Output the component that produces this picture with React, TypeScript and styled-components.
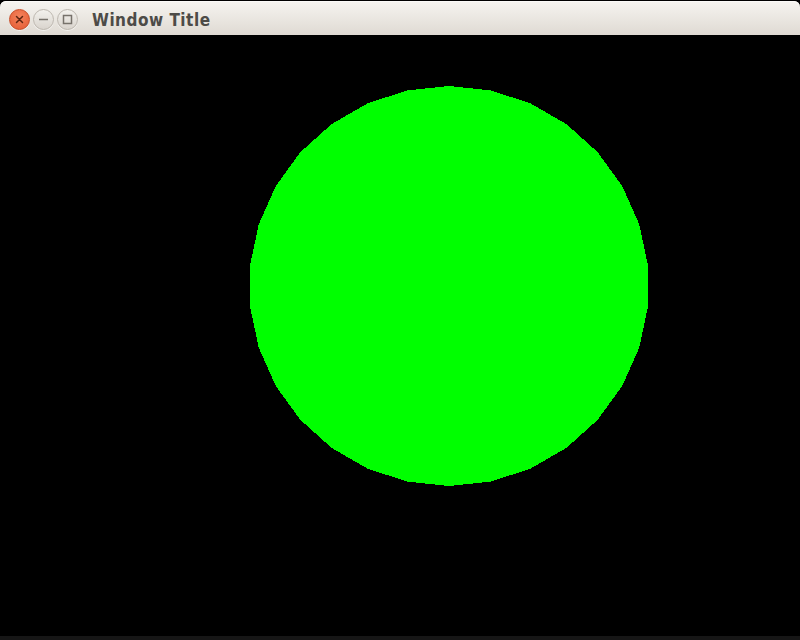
import React from "react";
import styled, { createGlobalStyle } from "styled-components";

const Global = createGlobalStyle`
  html, body { margin: 0; padding: 0; background: #000; }
  body { width: 800px; height: 640px; overflow: hidden; }
`;

const Frame = styled.div`
  width: 800px;
  height: 640px;
  display: flex;
  flex-direction: column;
  background: #000;
  padding-top: 1px;
  box-sizing: border-box;
`;

const TitleBar = styled.div`
  height: 34px;
  flex: none;
  display: flex;
  align-items: center;
  padding-left: 9px;
  padding-top: 3px;
  box-sizing: border-box;
  border-radius: 6px 6px 0 0;
  background: linear-gradient(#f6f4f0, #dfdad3);
  box-shadow: inset 0 1px 0 #fbfaf8;
`;

const Buttons = styled.div`
  display: flex;
  gap: 3px;
  align-items: center;
`;

const WinButton = styled.div<{ $close?: boolean }>`
  width: 21px;
  height: 21px;
  border-radius: 50%;
  box-sizing: border-box;
  display: flex;
  align-items: center;
  justify-content: center;
  background: ${(p) =>
    p.$close
      ? "radial-gradient(circle at 50% 35%, #f4835c, #e45a32)"
      : "linear-gradient(#f3f1ed, #d9d4cd)"};
  border: 1px solid ${(p) => (p.$close ? "#c84a24" : "#bdb7af")};
  box-shadow: 0 1px 0 rgba(255,255,255,0.6);
`;

const Title = styled.div`
  margin-left: 14px;
  font-family: "DejaVu Sans Condensed", "DejaVu Sans", sans-serif;
  font-stretch: condensed;
  font-weight: bold;
  font-size: 17px;
  color: #4d4b47;
  letter-spacing: 0.5px;
`;

const Canvas = styled.div`
  flex: 1;
  display: flex;
  flex-direction: column;
  background: #000;
`;

const Stage = styled.div`
  flex: 1;
  position: relative;
`;

const BottomEdge = styled.div`
  height: 4px;
  flex: none;
  background: #161616;
`;

const CircleSvg = styled.svg`
  position: absolute;
  left: 0;
  top: 0;
`;

function polygonPoints(cx: number, cy: number, r: number, n: number) {
  const pts: string[] = [];
  for (let i = 0; i < n; i++) {
    const a = (2 * Math.PI * i) / n;
    pts.push(`${(cx + r * Math.sin(a)).toFixed(2)},${(cy - r * Math.cos(a)).toFixed(2)}`);
  }
  return pts.join(" ");
}

export default function App() {
  return (
    <>
      <Global />
      <Frame>
        <TitleBar>
          <Buttons>
            <WinButton $close>
              <svg width="11" height="11" viewBox="0 0 11 11">
                <path d="M2.5 2.5 L8.5 8.5 M8.5 2.5 L2.5 8.5" stroke="#5e2410" strokeWidth="1.5" strokeLinecap="round" />
              </svg>
            </WinButton>
            <WinButton>
              <svg width="13" height="13" viewBox="0 0 13 13">
                <path d="M2 6.5 H11" stroke="#77726b" strokeWidth="1.5" />
              </svg>
            </WinButton>
            <WinButton>
              <svg width="13" height="13" viewBox="0 0 13 13">
                <rect x="2.5" y="2.5" width="8" height="8" fill="none" stroke="#77726b" strokeWidth="1.5" />
              </svg>
            </WinButton>
          </Buttons>
          <Title>Window Title</Title>
        </TitleBar>
        <Canvas>
          <Stage>
            <CircleSvg width="800" height="601" viewBox="0 35 800 601">
              <polygon points={polygonPoints(449, 286, 200, 30)} fill="#00ff00" shapeRendering="crispEdges" />
            </CircleSvg>
          </Stage>
          <BottomEdge />
        </Canvas>
      </Frame>
    </>
  );
}
